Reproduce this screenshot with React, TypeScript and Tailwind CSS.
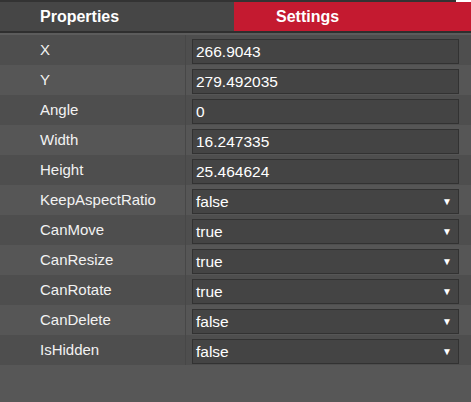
import { useState } from 'react';

type Row = { label: string; value: string; select?: boolean };

const rows: Row[] = [
  { label: 'X', value: '266.9043' },
  { label: 'Y', value: '279.492035' },
  { label: 'Angle', value: '0' },
  { label: 'Width', value: '16.247335' },
  { label: 'Height', value: '25.464624' },
  { label: 'KeepAspectRatio', value: 'false', select: true },
  { label: 'CanMove', value: 'true', select: true },
  { label: 'CanResize', value: 'true', select: true },
  { label: 'CanRotate', value: 'true', select: true },
  { label: 'CanDelete', value: 'false', select: true },
  { label: 'IsHidden', value: 'false', select: true },
];

export default function App() {
  const [tab, setTab] = useState('Properties');

  return (
    <div
      className="w-[471px] h-[402px] bg-[#575757] text-white overflow-hidden"
      style={{ fontFamily: '"Liberation Sans", Arial, sans-serif' }}
    >
      {/* top strip */}
      <div className="flex h-[2px]">
        <div className="flex-1 bg-[#333333]" />
        <div className="w-[15px] bg-white" />
      </div>

      {/* tabs */}
      <div className="flex h-[31px] border-b-2 border-[#2f2f2f]">
        {['Properties', 'Settings'].map((t) => (
          <button
            key={t}
            onClick={() => setTab(t)}
            className={`h-full text-left font-bold text-[16px] pt-[1px] ${
              t === 'Properties'
                ? 'w-[234px] pl-[40px] bg-[#464646] text-white'
                : 'flex-1 pl-[42px] bg-[#c41a30] text-white'
            }`}
          >
            {t}
          </button>
        ))}
      </div>
      <div className="h-[2px] bg-[#5c5c5c]" />

      {/* property rows */}
      <div>
        {rows.map((r, i) => (
          <div
            key={r.label}
            className={`flex h-[30px] ${i % 2 === 0 ? 'bg-[#4e4e4e]' : 'bg-[#565656]'}`}
          >
            <div className="w-[186px] flex items-center pl-[40px] pt-[1px] text-[15px] text-[#f2f2f2] border-r border-[#474747]">
              {r.label}
            </div>
            <div className="flex-1 pl-[6px] pr-[12px] pt-[4px]">
              <div className="h-[25px] bg-[#444444] border border-[#323232] flex items-center pl-[3px] pr-[6px] text-[15.5px] text-white">
                <span className="flex-1">{r.value}</span>
                {r.select && <span className="text-[10px] text-white">▼</span>}
              </div>
            </div>
          </div>
        ))}
      </div>
      {tab === 'Settings' && null}
    </div>
  );
}
